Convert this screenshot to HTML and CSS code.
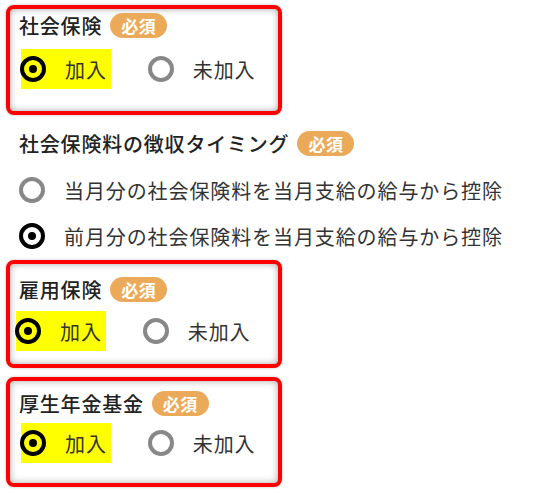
FILE: index.html
```html
<!DOCTYPE html>
<html lang="ja">
<head>
<meta charset="utf-8">
<link rel="stylesheet" href="styles.css">
</head>
<body>
<div class="page">
  <section class="box box-1">
    <div class="field-title"><span class="label-text">社会保険</span><span class="badge">必須</span></div>
    <div class="radios">
      <div class="radio-item selected"><span class="radio on"></span><span class="opt">加入</span></div>
      <div class="radio-item"><span class="radio off"></span><span class="opt">未加入</span></div>
    </div>
  </section>

  <section class="plain">
    <div class="field-title"><span class="label-text">社会保険料の徴収タイミング</span><span class="badge">必須</span></div>
    <div class="options">
      <div class="radio-item"><span class="radio off"></span><span class="opt">当月分の社会保険料を当月支給の給与から控除</span></div>
      <div class="radio-item"><span class="radio on"></span><span class="opt">前月分の社会保険料を当月支給の給与から控除</span></div>
    </div>
  </section>

  <section class="box box-2">
    <div class="field-title"><span class="label-text">雇用保険</span><span class="badge">必須</span></div>
    <div class="radios">
      <div class="radio-item selected"><span class="radio on"></span><span class="opt">加入</span></div>
      <div class="radio-item"><span class="radio off"></span><span class="opt">未加入</span></div>
    </div>
  </section>

  <section class="box box-3">
    <div class="field-title"><span class="label-text">厚生年金基金</span><span class="badge">必須</span></div>
    <div class="radios">
      <div class="radio-item selected"><span class="radio on"></span><span class="opt">加入</span></div>
      <div class="radio-item"><span class="radio off"></span><span class="opt">未加入</span></div>
    </div>
  </section>
</div>
</body>
</html>
```

FILE: styles.css
```css
html, body {
  margin: 0;
  padding: 0;
  background: #fff;
}
body {
  font-family: "Noto Sans CJK JP", "Noto Sans", sans-serif;
  color: #333;
  width: 560px;
  height: 494px;
  overflow: hidden;
}
.page {
  padding: 5px 0 0 6px;
}
.box {
  width: 276px;
  box-sizing: border-box;
  border: 4px solid #ff0000;
  border-radius: 8px;
  box-shadow: inset 0 0 7px rgba(0, 0, 0, 0.35), 0 0 3px rgba(0, 0, 0, 0.25);
  padding-left: 9px;
}
.box-1 { padding-top: 3px; padding-bottom: 22px; }
.box-2 { margin-top: 4px; padding-top: 12px; padding-bottom: 13px; }
.box-3 { margin-top: 9px; padding-top: 9px; padding-bottom: 20px; }

.field-title {
  display: flex;
  align-items: center;
  height: 26px;
}
.label-text {
  font-size: 20px;
  letter-spacing: 0.8px;
  font-weight: 500;
  color: #222;
}
.badge {
  margin-left: 8px;
  width: 57px;
  height: 25px;
  border-radius: 13px;
  background: #ebaa5a;
  color: #fff;
  font-weight: 700;
  font-size: 17px;
  display: flex;
  align-items: center;
  justify-content: center;
  letter-spacing: 0.5px;
}
.radios {
  display: flex;
  gap: 38px;
  margin-top: 11px;
  margin-left: 2px;
}
.box-2 .radios { margin-top: 9px; margin-left: -3px; }
.box-3 .radios { margin-top: 7px; margin-left: 2px; }

.radio-item {
  display: flex;
  align-items: center;
  height: 40px;
  padding-right: 4px;
}
.radio-item.selected {
  background: #ffff00;
}
.radio {
  width: 26px;
  height: 26px;
  box-sizing: border-box;
  border-radius: 50%;
  flex: none;
  position: relative;
  margin-left: -1px;
}
.radio.on {
  border: 4px solid #000;
}
.radio.on::after {
  content: "";
  position: absolute;
  left: 50%;
  top: 50%;
  width: 8px;
  height: 8px;
  margin: -4px 0 0 -4px;
  border-radius: 50%;
  background: #000;
}
.radio.off {
  border: 4px solid #888;
}
.opt {
  margin-left: 19px;
  font-size: 20px;
  letter-spacing: 0.9px;
  color: #333;
}

.plain {
  padding-left: 13px;
  padding-top: 15px;
}
.plain .options {
  margin-top: 14px;
  margin-left: 1px;
  display: flex;
  flex-direction: column;
  gap: 6px;
}
```
